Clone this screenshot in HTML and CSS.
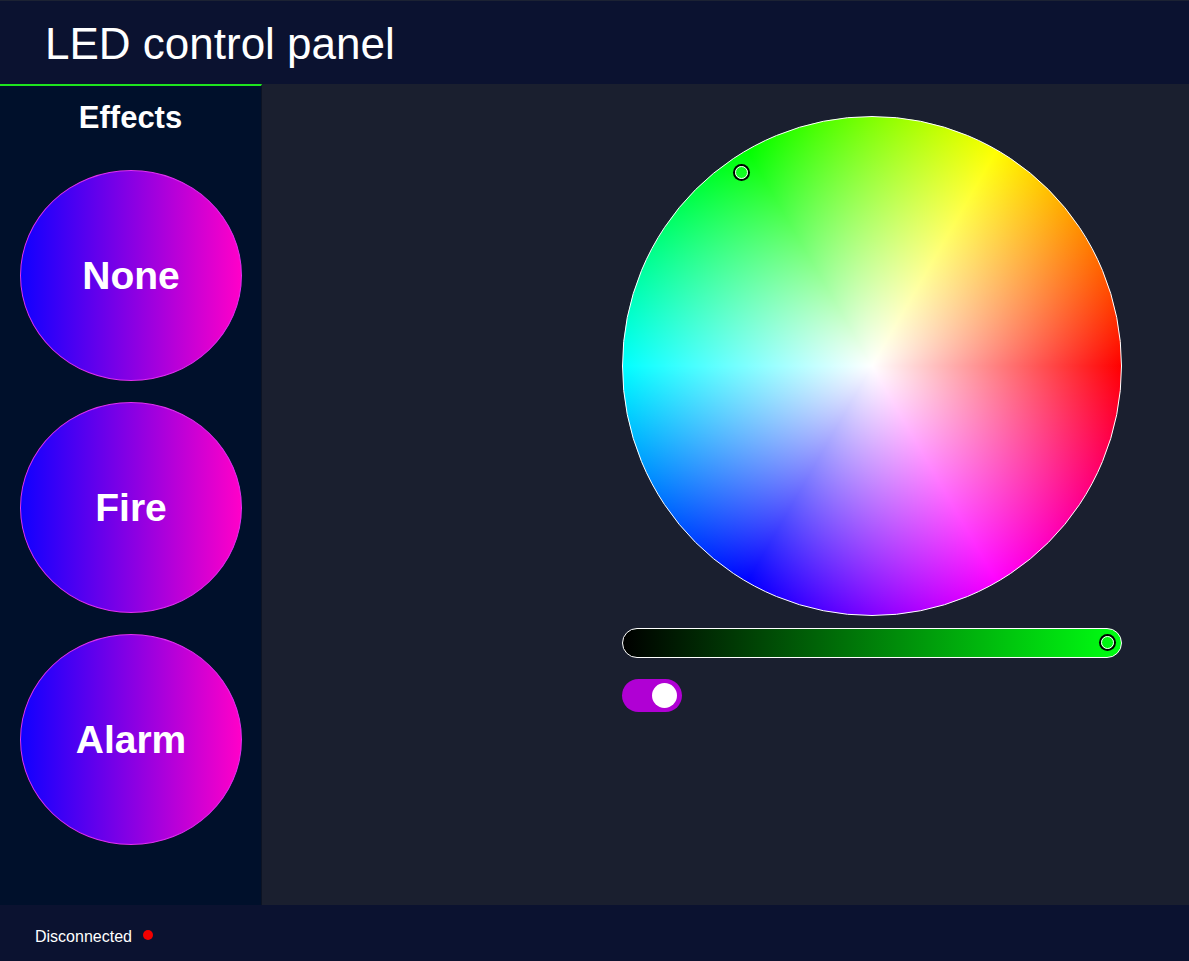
FILE: index.html
```html
<!DOCTYPE html>
<html lang="en">
<head>
<meta charset="utf-8">
<title>LED control panel</title>
<link rel="stylesheet" href="styles.css">
</head>
<body>
<div class="app">
  <header class="header">
    <h1 class="title">LED control panel</h1>
  </header>
  <div class="body">
    <aside class="sidebar">
      <h2 class="sidebar-title">Effects</h2>
      <div class="effects">
        <button class="effect">None</button>
        <button class="effect">Fire</button>
        <button class="effect">Alarm</button>
      </div>
    </aside>
    <main class="main">
      <div class="picker">
        <div class="wheel">
          <span class="handle wheel-handle"></span>
        </div>
        <div class="slider">
          <span class="handle slider-handle"></span>
        </div>
        <div class="toggle"><span class="knob"></span></div>
      </div>
    </main>
  </div>
  <footer class="footer">
    <span class="status">Disconnected</span>
    <span class="dot"></span>
  </footer>
</div>
</body>
</html>
```
FILE: styles.css
```css
* { box-sizing: border-box; }
html, body { margin: 0; padding: 0; height: 100%; }
body {
  font-family: "Liberation Sans", Arial, sans-serif;
  background: #1a1f2e;
  color: #fff;
}
.app {
  display: flex;
  flex-direction: column;
  height: 961px;
  border-top: 1px solid #1c2233;
}
.header {
  height: 83px;
  background: #0b1230;
  display: flex;
  align-items: center;
  padding-left: 45px;
}
.title {
  margin: 0;
  font-size: 44px;
  font-weight: normal;
  line-height: 1;
  padding-top: 2px;
}
.body {
  flex: 1;
  display: flex;
}
.sidebar {
  width: 262px;
  background: #00102b;
  border-top: 2px solid #1ee41e;
  padding: 15px 20px 0;
  border-right: 1px solid #0c1324;
}
.sidebar-title {
  margin: 0;
  text-align: center;
  font-size: 31px;
  line-height: 34px;
  font-weight: bold;
}
.effects {
  margin-top: 35px;
  display: flex;
  flex-direction: column;
  gap: 21px;
}
.effect {
  width: 222px;
  height: 211px;
  border-radius: 50%;
  border: 1px solid #e030f0;
  background: linear-gradient(to right, #1100ff, #ff00c8);
  color: #fff;
  font-family: "Liberation Sans", Arial, sans-serif;
  font-weight: bold;
  font-size: 39px;
  padding: 0 0 0 0;
  line-height: 1;
  cursor: pointer;
}
.main {
  flex: 1;
  background: #1a1f2f;
  padding: 32px 0 0 360px;
}
.picker {
  display: flex;
  flex-direction: column;
  width: 500px;
}
.wheel {
  position: relative;
  width: 500px;
  height: 500px;
  border-radius: 50%;
  border: 1px solid #fff;
  background:
    radial-gradient(circle closest-side, #fff 0%, rgba(255,255,255,0) 100%),
    conic-gradient(from 90deg, #f00, #f0f, #00f, #0ff, #0f0, #ff0, #f00);
}
.handle {
  position: absolute;
  width: 13px;
  height: 13px;
  border-radius: 50%;
  border: 1.5px solid #fff;
  box-shadow: 0 0 0 2px #000;
  background: transparent;
}
.wheel-handle {
  left: 112px;
  top: 49px;
}
.slider {
  position: relative;
  margin-top: 12px;
  height: 30px;
  border-radius: 15px;
  border: 1px solid #fff;
  background: linear-gradient(to right, #000 0%, #00ff12 100%);
}
.slider-handle {
  right: 7px;
  top: 7px;
}
.toggle {
  margin-top: 21px;
  width: 60px;
  height: 33px;
  border-radius: 17px;
  background: #b000d4;
  display: flex;
  align-items: center;
  justify-content: flex-end;
  padding-right: 5px;
}
.knob {
  width: 25px;
  height: 25px;
  border-radius: 50%;
  background: #fff;
}
.footer {
  height: 56px;
  background: #0b1230;
  display: flex;
  align-items: center;
  padding: 7px 0 0 35px;
  gap: 11px;
}
.status {
  font-size: 16px;
}
.dot {
  width: 10px;
  height: 10px;
  border-radius: 50%;
  background: #f20000;
  margin-top: -4px;
}
```
